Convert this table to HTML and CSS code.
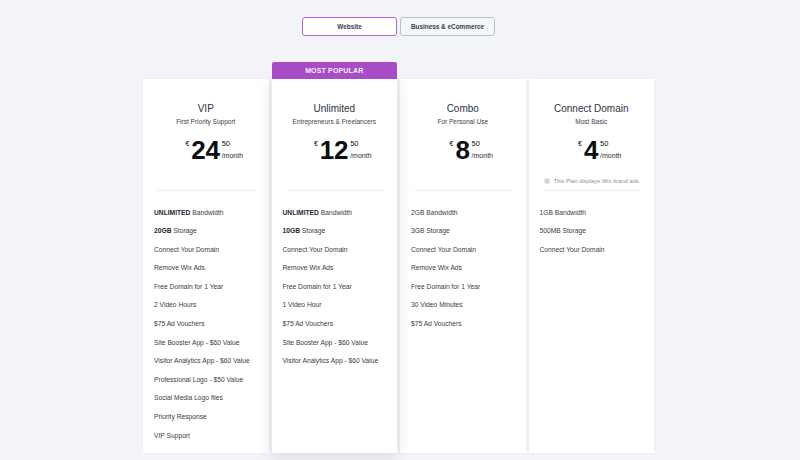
FILE: index.html
```html
<!DOCTYPE html>
<html lang="en">
<head>
<meta charset="utf-8">
<title>Plans</title>
<link rel="stylesheet" href="styles.css">
</head>
<body>
<div class="page">
  <div class="toggle">
    <button class="tab tab-active">Website</button>
    <button class="tab">Business &amp; eCommerce</button>
  </div>
  <div class="plans">
    <div class="plan">
      <div class="head">
        <div class="title">VIP</div>
        <div class="sub">First Priority Support</div>
        <div class="price"><span class="cur">€</span><span class="amt">24</span><span class="side"><span class="cents">50</span><span class="per">/month</span></span></div>
      </div>
      <div class="divider"></div>
      <ul class="features">
        <li><b>UNLIMITED</b> Bandwidth</li>
        <li><b>20GB</b> Storage</li>
        <li>Connect Your Domain</li>
        <li>Remove Wix Ads</li>
        <li>Free Domain for 1 Year</li>
        <li>2 Video Hours</li>
        <li>$75 Ad Vouchers</li>
        <li>Site Booster App - $60 Value</li>
        <li>Visitor Analytics App - $60 Value</li>
        <li>Professional Logo - $50 Value</li>
        <li>Social Media Logo files</li>
        <li>Priority Response</li>
        <li>VIP Support</li>
      </ul>
    </div>
    <div class="plan plan-popular">
      <div class="badge">MOST POPULAR</div>
      <div class="head">
        <div class="title">Unlimited</div>
        <div class="sub">Entrepreneurs &amp; Freelancers</div>
        <div class="price"><span class="cur">€</span><span class="amt">12</span><span class="side"><span class="cents">50</span><span class="per">/month</span></span></div>
      </div>
      <div class="divider"></div>
      <ul class="features">
        <li><b>UNLIMITED</b> Bandwidth</li>
        <li><b>10GB</b> Storage</li>
        <li>Connect Your Domain</li>
        <li>Remove Wix Ads</li>
        <li>Free Domain for 1 Year</li>
        <li>1 Video Hour</li>
        <li>$75 Ad Vouchers</li>
        <li>Site Booster App - $60 Value</li>
        <li>Visitor Analytics App - $60 Value</li>
      </ul>
    </div>
    <div class="plan">
      <div class="head">
        <div class="title">Combo</div>
        <div class="sub">For Personal Use</div>
        <div class="price"><span class="cur">€</span><span class="amt">8</span><span class="side"><span class="cents">50</span><span class="per">/month</span></span></div>
      </div>
      <div class="divider"></div>
      <ul class="features">
        <li>2GB Bandwidth</li>
        <li>3GB Storage</li>
        <li>Connect Your Domain</li>
        <li>Remove Wix Ads</li>
        <li>Free Domain for 1 Year</li>
        <li>30 Video Minutes</li>
        <li>$75 Ad Vouchers</li>
      </ul>
    </div>
    <div class="plan">
      <div class="head">
        <div class="title">Connect Domain</div>
        <div class="sub">Most Basic</div>
        <div class="price"><span class="cur">€</span><span class="amt">4</span><span class="side"><span class="cents">50</span><span class="per">/month</span></span></div>
        <div class="note"><svg class="info" width="6" height="6" viewBox="0 0 12 12"><circle cx="6" cy="6" r="5.5" fill="#e3e6eb" stroke="#c8cdd5" stroke-width="1"/><rect x="5.3" y="5" width="1.4" height="4" fill="#7f8898"/><circle cx="6" cy="3.4" r="0.8" fill="#7f8898"/></svg><span>This Plan displays Wix brand ads</span></div>
      </div>
      <div class="divider"></div>
      <ul class="features">
        <li>1GB Bandwidth</li>
        <li>500MB Storage</li>
        <li>Connect Your Domain</li>
      </ul>
    </div>
  </div>
</div>
</body>
</html>
```
FILE: styles.css
```css
* { box-sizing: border-box; }
html, body {
  margin: 0;
  padding: 0;
  background: #f3f4f7;
  font-family: "Liberation Sans", Arial, sans-serif;
  color: #2f3542;
}
.page {
  width: 800px;
  height: 460px;
  padding: 17px 3px 0 0;
  overflow: hidden;
}
.toggle {
  display: flex;
  justify-content: center;
  gap: 3px;
}
.tab {
  width: 95px;
  height: 19px;
  padding: 0;
  border: 1px solid #b9c1cc;
  border-radius: 3px;
  background: #f5f6f8;
  font-family: "Liberation Sans", Arial, sans-serif;
  font-size: 6.4px;
  font-weight: 700;
  color: #3a404c;
}
.tab-active {
  background: #ffffff;
  border: 1.5px solid #b462d2;
}
.plans {
  width: 511px;
  margin: 43px auto 0;
  display: grid;
  grid-template-columns: repeat(4, 1fr);
  gap: 3px;
  align-items: stretch;
}
.plan {
  background: #ffffff;
  box-shadow: 0 0 2px rgba(30, 40, 60, 0.05);
  display: flex;
  flex-direction: column;
}
.plan-popular {
  position: relative;
  z-index: 1;
  box-shadow: 0 3px 14px rgba(30, 40, 60, 0.13);
}
.badge {
  position: absolute;
  left: 0;
  right: 0;
  bottom: 100%;
  height: 17px;
  background: #a94cc8;
  border-radius: 2px 2px 0 0;
  color: #f6ecfa;
  font-size: 7px;
  font-weight: 700;
  letter-spacing: 0.15px;
  display: flex;
  align-items: center;
  justify-content: center;
}
.head {
  height: 111px;
  padding-top: 24px;
  display: flex;
  flex-direction: column;
  align-items: center;
  text-align: center;
}
.title {
  font-size: 10px;
  line-height: 12px;
  color: #2c3442;
}
.sub {
  margin-top: 2.5px;
  font-size: 6.5px;
  line-height: 8px;
  color: #3a4150;
}
.price {
  margin-top: 11.5px;
  padding-left: 17px;
  display: flex;
  align-items: flex-start;
  color: #0d0e10;
}
.cur {
  margin-top: 3px;
  margin-right: 2px;
  font-size: 7px;
  line-height: 7px;
}
.amt {
  font-size: 26px;
  line-height: 26px;
  font-weight: 700;
  letter-spacing: -0.3px;
}
.side {
  margin-left: 2px;
  display: flex;
  flex-direction: column;
  align-items: flex-start;
}
.cents {
  margin-top: 3px;
  font-size: 7.5px;
  line-height: 8px;
}
.per {
  margin-top: 4px;
  font-size: 7px;
  line-height: 8px;
  color: #2a2f38;
}
.note {
  margin-top: auto;
  margin-bottom: 5px;
  display: flex;
  align-items: center;
  gap: 4px;
  font-size: 5.8px;
  line-height: 8px;
  color: #8b93a2;
}
.info { display: block; }
.divider {
  height: 1px;
  margin: 0 13px 0 14px;
  background: #eceef2;
}
.features {
  list-style: none;
  margin: 0;
  padding: 12.5px 8px 8px 11px;
}
.features li {
  font-size: 6.7px;
  line-height: 18.6px;
  color: #363c48;
  white-space: nowrap;
}
.features b {
  font-weight: 700;
  color: #1f2430;
}
```
